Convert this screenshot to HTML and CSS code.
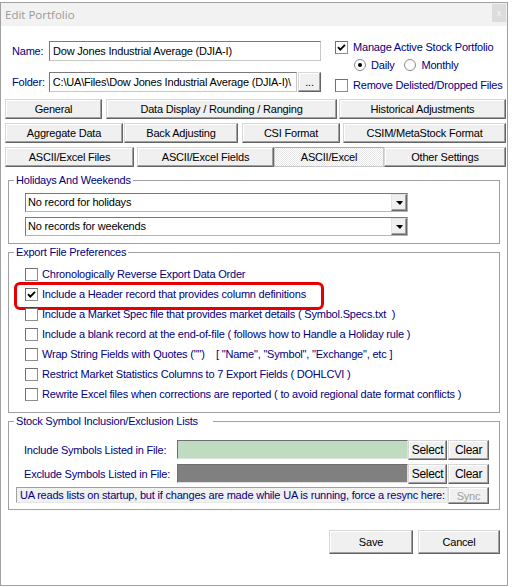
FILE: index.html
```html
<!DOCTYPE html>
<html>
<head>
<meta charset="utf-8">
<title>Edit Portfolio</title>
<link rel="stylesheet" href="styles.css">
</head>
<body>
<div class="window">
  <div class="titlebar">
    <span class="title">Edit Portfolio</span>
    <span class="close">x</span>
  </div>
  <div class="body">
    <div class="top">
      <div class="paths">
        <div class="field">
          <span class="lbl">Name:</span>
          <div class="input name-input">Dow Jones Industrial Average (DJIA-I)</div>
        </div>
        <div class="field">
          <span class="lbl">Folder:</span>
          <div class="input folder-input">C:\UA\Files\Dow Jones Industrial Average (DJIA-I)\</div>
          <div class="btn browse">...</div>
        </div>
      </div>
      <div class="options">
        <div class="opt">
          <span class="cb cb-top"><svg class="tick" viewBox="0 0 11 11"><polyline points="2,5.2 4.3,7.6 9,2.8"/></svg></span>
          <span>Manage Active Stock Portfolio</span>
        </div>
        <div class="opt radios">
          <span class="rb on"></span><span class="rb-lbl">Daily</span>
          <span class="rb rb-second"></span><span class="rb-lbl">Monthly</span>
        </div>
        <div class="opt opt-last">
          <span class="cb cb-top"></span>
          <span>Remove Delisted/Dropped Files</span>
        </div>
      </div>
    </div>

    <div class="tabs">
      <div class="tabrow">
        <div class="btn tab t-general">General</div>
        <div class="btn tab t-display">Data Display / Rounding / Ranging</div>
        <div class="btn tab t-hist">Historical Adjustments</div>
      </div>
      <div class="tabrow">
        <div class="btn tab t-agg">Aggregate Data</div>
        <div class="btn tab t-back">Back Adjusting</div>
        <div class="btn tab t-csi">CSI Format</div>
        <div class="btn tab t-csim">CSIM/MetaStock Format</div>
      </div>
      <div class="tabrow">
        <div class="btn tab t-files">ASCII/Excel Files</div>
        <div class="btn tab t-fields">ASCII/Excel Fields</div>
        <div class="tab tab-selected t-excel">ASCII/Excel</div>
        <div class="btn tab t-other">Other Settings</div>
      </div>
    </div>

    <fieldset class="group holidays">
      <legend>Holidays And Weekends</legend>
      <div class="group-body holidays-body">
        <div class="combo">
          <span class="combo-text">No record for holidays</span>
          <span class="combo-btn"><span class="arrow"></span></span>
        </div>
        <div class="combo combo-second">
          <span class="combo-text">No records for weekends</span>
          <span class="combo-btn"><span class="arrow"></span></span>
        </div>
      </div>
    </fieldset>

    <fieldset class="group export">
      <legend>Export File Preferences</legend>
      <div class="group-body export-body">
        <div class="chk-row"><span class="cb"></span><span>Chronologically Reverse Export Data Order</span></div>
        <div class="chk-row highlight"><span class="cb"><svg class="tick" viewBox="0 0 11 11"><polyline points="2,5.2 4.3,7.6 9,2.8"/></svg></span><span>Include a Header record that provides column definitions</span></div>
        <div class="chk-row"><span class="cb"></span><span>Include a Market Spec file that provides market details ( Symbol.Specs.txt  )</span></div>
        <div class="chk-row"><span class="cb"></span><span>Include a blank record at the end-of-file ( follows how to Handle a Holiday rule )</span></div>
        <div class="chk-row"><span class="cb"></span><span>Wrap String Fields with Quotes ("")    [ "Name", "Symbol", "Exchange", etc ]</span></div>
        <div class="chk-row"><span class="cb"></span><span>Restrict Market Statistics Columns to 7 Export Fields ( DOHLCVI )</span></div>
        <div class="chk-row"><span class="cb"></span><span>Rewrite Excel files when corrections are reported ( to avoid regional date format conflicts )</span></div>
      </div>
    </fieldset>

    <fieldset class="group stock">
      <legend class="legend-wide">Stock Symbol Inclusion/Exclusion Lists</legend>
      <div class="group-body stock-body">
        <div class="sym-row">
          <span class="sym-lbl">Include Symbols Listed in File:</span>
          <div class="sym-input sym-green"></div>
          <div class="btn sym-btn">Select</div>
          <div class="btn sym-btn sym-clear">Clear</div>
        </div>
        <div class="sym-row sym-row-second">
          <span class="sym-lbl">Exclude Symbols Listed in File:</span>
          <div class="sym-input sym-gray"></div>
          <div class="btn sym-btn">Select</div>
          <div class="btn sym-btn sym-clear">Clear</div>
        </div>
        <div class="note-row">
          <div class="note">UA reads lists on startup, but if changes are made while UA is running, force a resync here:</div>
          <div class="btn sync">Sync</div>
        </div>
      </div>
    </fieldset>

    <div class="footer">
      <div class="btn save">Save</div>
      <div class="btn cancel">Cancel</div>
    </div>
  </div>
</div>
</body>
</html>
```

FILE: styles.css
```css
* {
  box-sizing: border-box;
}

html, body {
  margin: 0;
  padding: 0;
  background: #fff;
}

body {
  font-family: "Liberation Sans", Arial, sans-serif;
  font-size: 11px;
  letter-spacing: -0.2px;
  color: #000;
}

.window {
  margin-top: 2px;
  width: 508px;
  height: 584px;
  border: 1px solid #a0a0a0;
  background: #fff;
}

.titlebar {
  height: 23px;
  background: #f2f2f2;
  display: flex;
  justify-content: space-between;
  align-items: center;
  padding: 0 1px 0 4px;
}

.title {
  font-family: "Open Sans", "Noto Sans", sans-serif;
  font-size: 11.5px;
  letter-spacing: 0;
  color: #9a9a9a;
}

.close {
  align-self: flex-start;
  margin-top: 1px;
  width: 14px;
  height: 18px;
  background: #dcdcdc;
  color: #f6f6f6;
  font-size: 9px;
  display: flex;
  align-items: center;
  justify-content: center;
}

/* ---------- top area ---------- */
.top {
  display: flex;
  margin-top: 12px;
  padding-left: 11px;
}

.paths {
  width: 309px;
  padding-top: 3px;
  display: flex;
  flex-direction: column;
  gap: 11px;
}

.field {
  display: flex;
  align-items: center;
  height: 20px;
}

.lbl {
  width: 37px;
  color: #000080;
}

.input {
  height: 20px;
  border: 1px solid;
  border-color: #7a7a7a #c8c8c8 #c8c8c8 #7a7a7a;
  background: #fff;
  padding: 0 3px;
  line-height: 18px;
  white-space: nowrap;
  overflow: hidden;
}

.name-input {
  width: 272px;
}

.folder-input {
  width: 249px;
}

.browse {
  width: 23px;
  height: 20px;
  margin-left: 1px;
}

.options {
  margin-left: 14px;
  display: flex;
  flex-direction: column;
}

.opt {
  display: flex;
  align-items: center;
  height: 18px;
  color: #000080;
}

.opt-last {
  margin-top: 2px;
}

.radios {
  padding-left: 19px;
}

.rb {
  width: 12px;
  height: 12px;
  border-radius: 50%;
  border: 1px solid #8c8c8c;
  background: #fff;
  display: flex;
  align-items: center;
  justify-content: center;
  flex: none;
}

.rb.on::after {
  content: "";
  width: 4px;
  height: 4px;
  border-radius: 50%;
  background: #000;
}

.rb-lbl {
  margin-left: 5px;
}

.rb-second {
  margin-left: 10px;
}

/* ---------- checkboxes ---------- */
.cb {
  width: 13px;
  height: 13px;
  border: 1px solid #8e8e8e;
  border-top-color: #707070;
  border-left-color: #707070;
  background: #fff;
  margin-right: 4px;
  flex: none;
  display: flex;
  align-items: center;
  justify-content: center;
}

.cb-top {
  margin-right: 5px;
}

.tick {
  width: 11px;
  height: 11px;
}

.tick polyline {
  fill: none;
  stroke: #000;
  stroke-width: 1.9;
}

/* ---------- buttons ---------- */
.btn {
  background: #f0f0f0;
  border: 1px solid;
  border-color: #d8d8d8 #646464 #646464 #d8d8d8;
  box-shadow: inset -1px -1px 0 #a0a0a0, inset 1px 1px 0 #fff;
  display: flex;
  align-items: center;
  justify-content: center;
  white-space: nowrap;
  color: #000;
  flex: none;
}

/* ---------- tabs ---------- */
.tabs {
  margin-top: 5px;
  padding-left: 4px;
}

.tabrow {
  display: flex;
  height: 20px;
  margin-bottom: 4px;
}

.tabrow:last-child {
  margin-bottom: 0;
}

.tab {
  height: 20px;
}

.tab-selected {
  display: flex;
  align-items: center;
  justify-content: center;
  border: 1px solid #c8c8c8;
  border-top-color: #a8a8a8;
  background-color: #fff;
  background-image: repeating-conic-gradient(#e6e6e6 0 25%, #ffffff 0 50%);
  background-size: 2px 2px;
  flex: none;
}

.t-general { width: 97px; }
.t-display { width: 231px; margin-left: 4px; }
.t-hist { width: 167px; margin-left: 2px; }
.t-agg { width: 118px; }
.t-back { width: 114px; margin-left: 1px; }
.t-csi { width: 98px; margin-left: 4px; }
.t-csim { width: 163px; margin-left: 3px; }
.t-files { width: 129px; }
.t-fields { width: 137px; margin-left: 3px; }
.t-excel { width: 110px; }
.t-other { width: 122px; }

/* ---------- group boxes ---------- */
.group {
  margin: 0 0 0 7px;
  padding: 0;
  width: 492px;
  border: 1px solid #a0a0a0;
  min-width: 0;
}

.group legend {
  margin-left: 5px;
  padding: 0 2px;
  line-height: 13px;
  color: #000080;
}

.group .legend-wide {
  padding-right: 15px;
}

.holidays {
  margin-top: 7px;
}

.holidays-body {
  padding: 6px 0 7px 16px;
}

.export {
  margin-top: 2px;
}

.export-body {
  padding: 5px 0 8px 16px;
}

.stock {
  margin-top: 2px;
}

.stock-body {
  padding: 12px 0 5px 7px;
}

/* ---------- combo boxes ---------- */
.combo {
  display: flex;
  width: 383px;
  height: 19px;
  border: 1px solid #7a7a7a;
  border-right-color: #b4b4b4;
  border-bottom-color: #b4b4b4;
  background: #fff;
}

.combo-second {
  margin-top: 5px;
}

.combo-text {
  flex: 1;
  padding-left: 2px;
  line-height: 17px;
}

.combo-btn {
  width: 16px;
  height: 17px;
  background: #f0f0f0;
  border: 1px solid;
  border-color: #e3e3e3 #696969 #696969 #e3e3e3;
  box-shadow: inset -1px -1px 0 #a0a0a0;
  display: flex;
  align-items: center;
  justify-content: center;
}

.arrow {
  width: 0;
  height: 0;
  border-left: 4px solid transparent;
  border-right: 3px solid transparent;
  border-top: 4px solid #000;
  margin-top: 1px;
}

/* ---------- export checkbox rows ---------- */
.chk-row {
  position: relative;
  display: flex;
  align-items: center;
  height: 20px;
  color: #000080;
  white-space: pre;
}

.highlight::after {
  content: "";
  position: absolute;
  left: -11px;
  top: -2px;
  width: 304px;
  height: 22px;
  border: 3px solid #e60000;
  border-radius: 6px;
}

/* ---------- symbol lists ---------- */
.sym-row {
  display: flex;
  align-items: flex-start;
  height: 20px;
  margin-bottom: 4px;
}

.sym-row-second {
  margin-bottom: 3px;
}

.sym-lbl {
  width: 161px;
  padding-left: 8px;
  line-height: 20px;
  color: #000080;
}

.sym-input {
  width: 231px;
  height: 19px;
  border: 1px solid;
  border-color: #6e6e6e #e0e0e0 #e0e0e0 #6e6e6e;
}

.sym-green {
  background: #c0dcc0;
}

.sym-gray {
  background: #808080;
}

.sym-btn {
  width: 39px;
  height: 20px;
  font-size: 12px;
  letter-spacing: -0.3px;
}

.sym-clear {
  width: 41px;
  margin-left: 1px;
}

.note-row {
  display: flex;
  height: 17px;
}

.note {
  width: 432px;
  height: 16px;
  background: #f0f0f0;
  border: 1px solid #a0a0a0;
  border-right-color: #e6e6e6;
  border-bottom-color: #e6e6e6;
  color: #000080;
  padding-left: 3px;
  line-height: 14px;
  white-space: nowrap;
  overflow: hidden;
}

.sync {
  width: 41px;
  height: 17px;
  color: #a0a0a0;
}

/* ---------- footer ---------- */
.footer {
  display: flex;
  justify-content: flex-end;
  gap: 5px;
  margin-top: 20px;
  padding-right: 7px;
}

.save {
  width: 84px;
  height: 24px;
}

.cancel {
  width: 82px;
  height: 24px;
}
```
